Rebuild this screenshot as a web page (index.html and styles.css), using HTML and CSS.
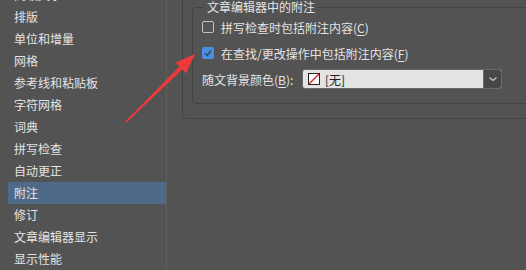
FILE: index.html
```html
<!DOCTYPE html>
<html lang="zh-CN">
<head>
  <meta charset="UTF-8">
  <title>首选项 - 附注</title>
  <link rel="stylesheet" href="styles.css">
</head>
<body>
  <div class="window">
    <ul class="nav">
      <li>高级文字</li>
      <li>排版</li>
      <li>单位和增量</li>
      <li>网格</li>
      <li>参考线和粘贴板</li>
      <li>字符网格</li>
      <li>词典</li>
      <li>拼写检查</li>
      <li>自动更正</li>
      <li class="active">附注</li>
      <li>修订</li>
      <li>文章编辑器显示</li>
      <li>显示性能</li>
    </ul>

    <div class="main">
      <div class="panel">
        <fieldset class="group">
          <legend>文章编辑器中的附注</legend>

          <label class="row">
            <span class="check"></span>
            <span>拼写检查时包括附注内容(<u>C</u>)</span>
          </label>

          <label class="row">
            <span class="check on">
              <svg width="12" height="12" viewBox="0 0 12 12"><path d="M3 6.2 L5.1 8.3 L9.2 3.8" fill="none" stroke="#3b4656" stroke-width="1.6"/></svg>
            </span>
            <span>在查找/更改操作中包括附注内容(<u>F</u>)</span>
          </label>

          <div class="row">
            <span class="field-label">随文背景颜色(<u>B</u>):</span>
            <div class="select">
              <span class="swatch">
                <svg width="12" height="12" viewBox="0 0 12 12"><rect x="0.5" y="0.5" width="11" height="11" fill="#fff" stroke="#222"/><path d="M1 11 L11 1" stroke="#e8202a" stroke-width="1.5"/></svg>
              </span>
              <span class="value">[无]</span>
              <span class="drop">
                <svg width="10" height="6" viewBox="0 0 10 6"><path d="M1.5 1.5 L5 4.5 L8.5 1.5" fill="none" stroke="#cfcfcf" stroke-width="1.1"/></svg>
              </span>
            </div>
          </div>
        </fieldset>
      </div>
    </div>
  </div>

  <!-- annotation arrow -->
  <svg class="arrow" width="526" height="270" viewBox="0 0 526 270">
    <polygon points="125.4,121.4 179.4,66.6 175.6,62.6 195,54 186,73.4 182.2,69.4 126.6,122.6" fill="#ee3a3a"/>
  </svg>
</body>
</html>
```

FILE: styles.css
```css
:root {
  --bg: #535353;
  --text: #e4e4e4;
  --line: #434343;
  --select: #4e6a88;
  --blue: #4a8fe2;
}

html, body {
  margin: 0;
  height: 100%;
  overflow: hidden;
}

body {
  background: var(--bg);
  color: var(--text);
  font-family: "Noto Sans CJK SC", "Noto Sans", sans-serif;
  font-size: 12px;
  position: relative;
}

.window {
  display: flex;
  height: 270px;
}

.nav {
  list-style: none;
  margin: -16px 0 0;
  padding: 0 0 0 8px;
  width: 158px;
  border-right: 1px solid #606060;
  flex-shrink: 0;
}

.nav li {
  height: 22px;
  line-height: 22px;
  padding-left: 6px;
  white-space: nowrap;
}

.nav li.active {
  background: var(--select);
}

.main {
  flex: 1;
  padding-left: 15px;
}

.panel {
  width: 400px;
  margin-top: -20px;
  padding: 19px 0 14px 9px;
  border: 1px solid var(--line);
  border-radius: 4px;
}

.group {
  margin: 0;
  padding: 0 0 11px 9px;
  border: 1px solid var(--line);
  border-radius: 4px;
  min-width: 0;
}

.group legend {
  margin-left: 2px;
  padding: 0 3px;
  line-height: 14px;
}

.row {
  display: flex;
  align-items: center;
  height: 26px;
  white-space: nowrap;
}

.row u {
  text-underline-offset: 2px;
}

.check {
  width: 10px;
  height: 10px;
  border: 1px solid #c4c4c4;
  border-radius: 2px;
  margin-right: 7px;
  display: flex;
}

.check.on {
  width: 12px;
  height: 12px;
  border: none;
  background: var(--blue);
}

.field-label {
  width: 100px;
}

.select {
  display: flex;
  align-items: center;
  width: 198px;
  height: 18px;
  background: #e3e3e3;
  border: 1px solid #6a6a6a;
  border-radius: 3px;
  color: #1f1f1f;
  overflow: hidden;
}

.swatch {
  display: flex;
  margin: 0 5px 0 5px;
}

.value {
  flex: 1;
}

.drop {
  width: 17px;
  height: 18px;
  background: #474747;
  border-left: 1px solid #6a6a6a;
  display: flex;
  align-items: center;
  justify-content: center;
}

.arrow {
  position: absolute;
  left: 0;
  top: 0;
  pointer-events: none;
}
```
